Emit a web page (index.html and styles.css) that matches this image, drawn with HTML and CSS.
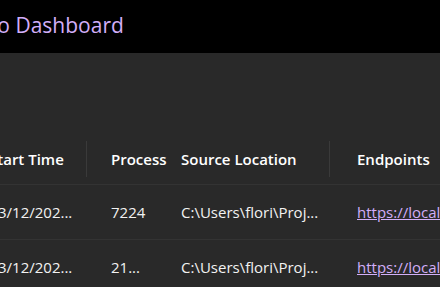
FILE: index.html
```html
<!DOCTYPE html>
<html>
<head>
<meta charset="utf-8">
<link rel="stylesheet" href="styles.css">
</head>
<body>
<header class="topbar">
  <h1 class="title"><span class="prefix">Todo</span> Dashboard</h1>
</header>
<main class="content">
  <div class="grid">
    <div class="row head">
      <div class="cell c1">Start Time<span class="divider"></span></div>
      <div class="cell c2">Process</div>
      <div class="cell c3">Source Location<span class="divider"></span></div>
      <div class="cell c4">Endpoints</div>
    </div>
    <div class="row">
      <div class="cell c1">3/12/202...</div>
      <div class="cell c2">7224</div>
      <div class="cell c3">C:\Users\flori\Proj...</div>
      <div class="cell c4"><a class="link" href="#">https://localhost:7001</a></div>
    </div>
    <div class="row">
      <div class="cell c1">3/12/202...</div>
      <div class="cell c2">21...</div>
      <div class="cell c3">C:\Users\flori\Proj...</div>
      <div class="cell c4"><a class="link" href="#">https://localhost:7002</a></div>
    </div>
  </div>
</main>
</body>
</html>
```
FILE: styles.css
```css
html, body {
  margin: 0;
  padding: 0;
  background: #292929;
  overflow: hidden;
  font-family: "Open Sans", "Noto Sans", sans-serif;
}
.topbar {
  height: 53px;
  background: #000;
  display: flex;
  align-items: center;
  overflow: hidden;
}
.title {
  margin: 0;
  font-size: 21px;
  font-weight: 400;
  color: #d2aef8;
  white-space: nowrap;
  line-height: 1;
  padding-bottom: 2px;
}
.prefix {
  display: inline-block;
  width: 10px;
  overflow: hidden;
  direction: rtl;
  vertical-align: bottom;
}
.content {
  padding-top: 77px;
  overflow: hidden;
}
.grid {
  margin-left: -30px;
  width: 640px;
}
.row {
  display: grid;
  grid-template-columns: 117px 81px 162px 260px;
  height: 54px;
  border-bottom: 1px solid #333333;
  font-size: 15px;
}
.row.head {
  font-weight: 600;
  padding-top: 3px;
  height: 51px;
}
.cell {
  display: flex;
  align-items: center;
  white-space: nowrap;
  position: relative;
  color: #f2f2f2;
}
.head .cell { color: #ffffff; }
.divider {
  position: absolute;
  right: 0;
  top: 8px;
  height: 36px;
  width: 1px;
  background: #3a3a3a;
}
.head .c1 { padding-left: 0; margin-left: -9px; }
.row .c1 { padding-left: 28px; }
.head .c2 { padding-left: 19px; }
.row .c2 { padding-left: 24px; }
.head .c3 { padding-left: 7px; }
.row .c3 { padding-left: 13px; }
.head .c4 { padding-left: 25px; }
.row .c4 { padding-left: 27px; }
.link {
  color: #d2aef8;
  text-decoration: underline;
}
```
